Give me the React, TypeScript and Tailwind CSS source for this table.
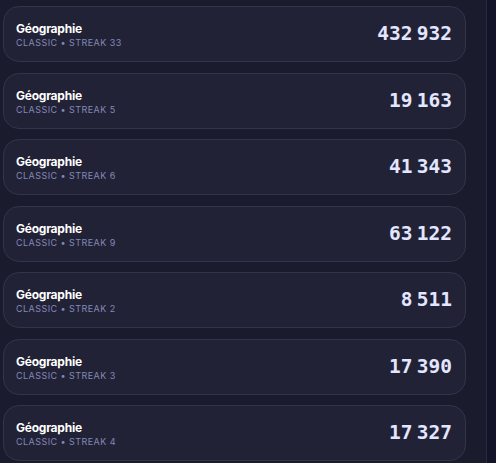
const rows = [
  { streak: 33, score: '432 932' },
  { streak: 5, score: '19 163' },
  { streak: 6, score: '41 343' },
  { streak: 9, score: '63 122' },
  { streak: 2, score: '8 511' },
  { streak: 3, score: '17 390' },
  { streak: 4, score: '17 327' },
]

export default function App() {
  return (
    <div className="flex h-[463px] w-[496px] overflow-hidden bg-[#1b1b2e]">
      <div className="flex w-[486px] flex-col gap-[10.5px] pl-[3px] pr-[20px] pt-[6px]">
        {rows.map((r, i) => (
          <div
            key={i}
            className="flex h-[56px] shrink-0 items-center justify-between rounded-[16px] border border-[#33344a] bg-[#222236] pl-[12px] pr-[13px]"
          >
            <div className="flex flex-col pt-[2px]" style={{ fontFamily: 'Inter, "Noto Sans", sans-serif' }}>
              <span className="text-[12px] font-bold leading-[15px] tracking-[-0.02em] text-white">Géographie</span>
              <span className="text-[9px] leading-[13px] tracking-[0.05em] text-[#8388b6]">
                CLASSIC • STREAK {r.streak}
              </span>
            </div>
            <span
              className="text-[19.5px] font-bold text-[#e3e6ff] [word-spacing:-7.5px]"
              style={{ fontFamily: '"DejaVu Sans Mono", monospace' }}
            >
              {r.score}
            </span>
          </div>
        ))}
      </div>
      <div className="w-[10px] border-l border-[#2a2a40] bg-[#13132a]" />
    </div>
  )
}
